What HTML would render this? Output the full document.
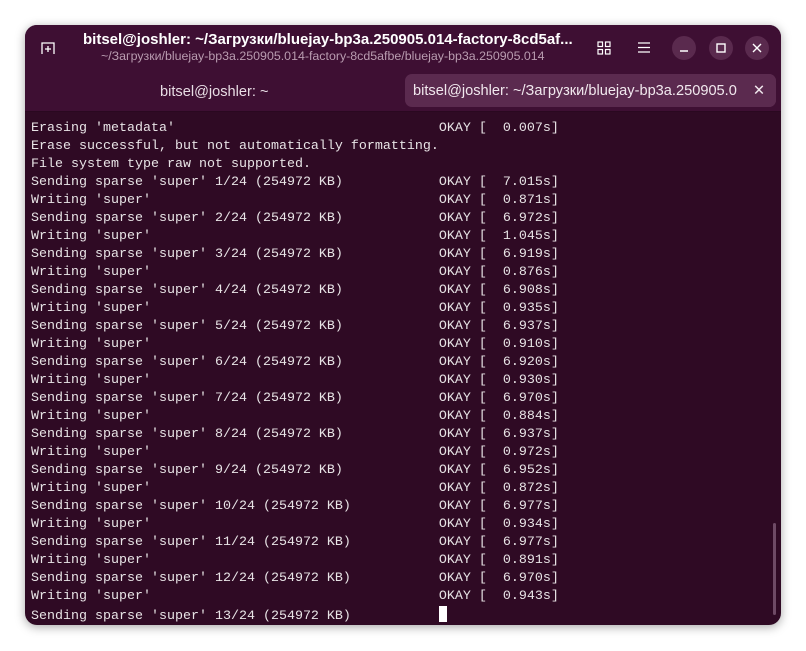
<!DOCTYPE html>
<html><head><meta charset="utf-8"><style>
body{margin:0;width:806px;height:651px;background:#fff;position:relative;overflow:hidden;font-family:"Liberation Sans","DejaVu Sans",sans-serif}
.win{position:absolute;left:25px;top:25px;width:756px;height:600px;border-radius:12px;overflow:hidden;background:#2f0a24;box-shadow:0 2px 10px rgba(0,0,0,.35)}
.hdr{position:absolute;left:0;top:0;width:756px;height:86px;background:#3e0f33;border-bottom:1px solid #2a0820}
.t1{position:absolute;left:58px;top:6px;color:#fff;font-weight:bold;font-size:15px;white-space:nowrap}
.t2{position:absolute;left:76px;top:24px;color:#b99cb0;font-size:12.4px;white-space:nowrap}
.btn{position:absolute;top:11px;width:24px;height:24px;border-radius:12px;background:#5a2a4e;color:#fff;text-align:center;line-height:24px;font-size:14px}
.tab1{position:absolute;left:135px;top:59px;color:#e8dde5;font-size:14.6px}
.tab2{position:absolute;left:380px;top:49px;width:371px;height:33px;border-radius:7px;background:#5b2a4f;color:#f1e8ee;font-size:14.6px;line-height:35px;white-space:nowrap;overflow:hidden}
pre{position:absolute;left:6px;top:95px;margin:0;font-family:"Liberation Mono","DejaVu Sans Mono",monospace;font-size:13.33px;line-height:18px;color:#e8e4e6}
.cur{display:inline-block;width:8px;height:16px;background:#fff;vertical-align:-3px}
.sb{position:absolute;left:748px;top:498px;width:3px;height:92px;background:#6e4a65;border-radius:2px}
</style></head><body>
<div class="win">
<div class="hdr">
<svg style="position:absolute;left:16px;top:17px" width="14" height="12" viewBox="0 0 14 12"><path d="M1 12V1h12v11" fill="none" stroke="#fff" stroke-width="1.3"/><path d="M7 4v6M4 7h6" stroke="#fff" stroke-width="1.3"/></svg>
<div class="t1">bitsel@joshler: ~/Загрузки/bluejay-bp3a.250905.014-factory-8cd5af...</div>
<div class="t2">~/Загрузки/bluejay-bp3a.250905.014-factory-8cd5afbe/bluejay-bp3a.250905.014</div>
<svg style="position:absolute;left:572px;top:16px" width="14" height="14" viewBox="0 0 14 14" fill="none" stroke="#fff" stroke-width="1.2"><rect x="1" y="1" width="4.5" height="4.5"/><rect x="8.5" y="1" width="4.5" height="4.5"/><rect x="1" y="8.5" width="4.5" height="4.5"/><rect x="8.5" y="8.5" width="4.5" height="4.5"/></svg>
<svg style="position:absolute;left:613px;top:17px" width="12" height="11" viewBox="0 0 12 11" stroke="#fff" stroke-width="1.2"><path d="M0 1h12M0 5.5h12M0 10h12"/></svg>
<div class="btn" style="left:647px"><svg width="24" height="24"><path d="M8 15h8" stroke="#fff" stroke-width="1.4"/></svg></div>
<div class="btn" style="left:684px"><svg width="24" height="24"><rect x="8" y="8" width="8" height="8" fill="none" stroke="#fff" stroke-width="1.4"/></svg></div>
<div class="btn" style="left:720px"><svg width="24" height="24"><path d="M8 8l8 8M16 8l-8 8" stroke="#fff" stroke-width="1.4"/></svg></div>
<div class="tab1">bitsel@joshler: ~</div>
<div class="tab2"><span style="position:absolute;left:8px">bitsel@joshler: ~/Загрузки/bluejay-bp3a.250905.0</span><span style="position:absolute;right:0;width:34px;background:#5b2a4f;text-align:center">✕</span></div>
</div>
<pre>Erasing 'metadata'                                 OKAY [  0.007s]
Erase successful, but not automatically formatting.
File system type raw not supported.
Sending sparse 'super' 1/24 (254972 KB)            OKAY [  7.015s]
Writing 'super'                                    OKAY [  0.871s]
Sending sparse 'super' 2/24 (254972 KB)            OKAY [  6.972s]
Writing 'super'                                    OKAY [  1.045s]
Sending sparse 'super' 3/24 (254972 KB)            OKAY [  6.919s]
Writing 'super'                                    OKAY [  0.876s]
Sending sparse 'super' 4/24 (254972 KB)            OKAY [  6.908s]
Writing 'super'                                    OKAY [  0.935s]
Sending sparse 'super' 5/24 (254972 KB)            OKAY [  6.937s]
Writing 'super'                                    OKAY [  0.910s]
Sending sparse 'super' 6/24 (254972 KB)            OKAY [  6.920s]
Writing 'super'                                    OKAY [  0.930s]
Sending sparse 'super' 7/24 (254972 KB)            OKAY [  6.970s]
Writing 'super'                                    OKAY [  0.884s]
Sending sparse 'super' 8/24 (254972 KB)            OKAY [  6.937s]
Writing 'super'                                    OKAY [  0.972s]
Sending sparse 'super' 9/24 (254972 KB)            OKAY [  6.952s]
Writing 'super'                                    OKAY [  0.872s]
Sending sparse 'super' 10/24 (254972 KB)           OKAY [  6.977s]
Writing 'super'                                    OKAY [  0.934s]
Sending sparse 'super' 11/24 (254972 KB)           OKAY [  6.977s]
Writing 'super'                                    OKAY [  0.891s]
Sending sparse 'super' 12/24 (254972 KB)           OKAY [  6.970s]
Writing 'super'                                    OKAY [  0.943s]
Sending sparse 'super' 13/24 (254972 KB)           <span class="cur"></span></pre>
<div class="sb"></div>
</div>
</body></html>
